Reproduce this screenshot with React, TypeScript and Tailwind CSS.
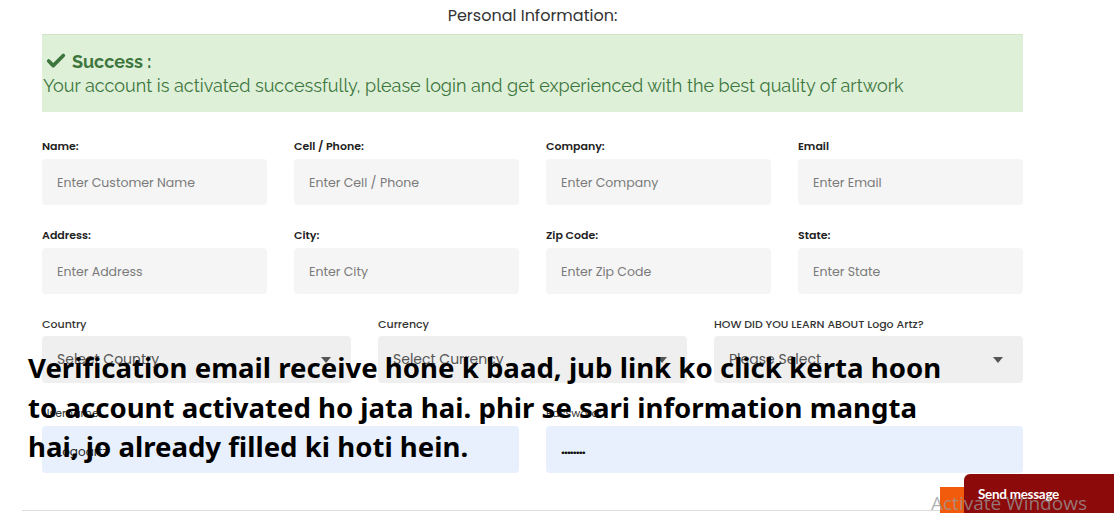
import { Check } from "lucide-react";

const poppins = "font-['Poppins','Open_Sans',sans-serif]";

function Field({ label, placeholder }: { label: string; placeholder: string }) {
  return (
    <div>
      <label className="block h-4 mb-[5px] text-[11px] leading-4 font-semibold text-[#222]">{label}</label>
      <div className="h-[46px] rounded-[4px] bg-[#f5f5f5] px-[15px] pt-[3px] flex items-center text-[12.5px] text-[#7a7a7a]">
        {placeholder}
      </div>
    </div>
  );
}

function SelectField({ label, value }: { label: string; value: string }) {
  return (
    <div>
      <label className="block h-4 mb-1 text-[11px] leading-4 font-medium text-[#333]">{label}</label>
      <div className="h-[47px] rounded-[4px] bg-[#efefef] pl-[15px] pr-[20px] flex items-center justify-between text-[14px] text-[#555]">
        <span>{value}</span>
        <svg width="10" height="6" viewBox="0 0 10 6" className="fill-[#555]">
          <path d="M0 0h10L5 6z" />
        </svg>
      </div>
    </div>
  );
}

export default function App() {
  return (
    <div className={`relative w-[1114px] h-[513px] overflow-hidden bg-white ${poppins}`}>
      <div className="w-[981px] ml-[42px]">
        <h2 className="pt-[6px] h-[34px] text-center text-[16px] leading-5 text-[#333]">Personal Information:</h2>

        <div className="h-[78px] bg-[#dff0d8] border-t border-[#d0e6c6] pl-px pt-[14px] text-[#3c763d] font-['Raleway','Lato',sans-serif]">
          <div className="flex items-center h-6 gap-[5px] text-[18px] font-bold">
            <Check size={22} strokeWidth={4} className="ml-[2px] text-[#3c763d]" />
            <span>Success :</span>
          </div>
          <p className="h-[25px] leading-[25px] text-[18px]">
            Your account is activated successfully, please login and get experienced with the best quality of artwork
          </p>
        </div>

        <div className="mt-[26px] grid grid-cols-4 gap-x-[27px] gap-y-[22px]">
          <Field label="Name:" placeholder="Enter Customer Name" />
          <Field label="Cell / Phone:" placeholder="Enter Cell / Phone" />
          <Field label="Company:" placeholder="Enter Company" />
          <Field label="Email" placeholder="Enter Email" />
          <Field label="Address:" placeholder="Enter Address" />
          <Field label="City:" placeholder="Enter City" />
          <Field label="Zip Code:" placeholder="Enter Zip Code" />
          <Field label="State:" placeholder="Enter State" />
        </div>

        <div className="mt-[22px] grid grid-cols-3 gap-x-[27px]">
          <SelectField label="Country" value="Select Country" />
          <SelectField label="Currency" value="Select Currency" />
          <SelectField label="HOW DID YOU LEARN ABOUT Logo Artz?" value="Please Select" />
        </div>

        <div className="mt-[22px] grid grid-cols-2 gap-x-[27px]">
          <div>
            <label className="block h-4 mb-[5px] text-[11px] leading-4 text-[#333]">Username:</label>
            <div className="h-[47px] rounded-[4px] bg-[#e8f0fe] px-[15px] flex items-center pt-[4px] text-[12px] text-[#222]">
              Logoartz
            </div>
          </div>
          <div>
            <label className="block h-4 mb-[5px] text-[11px] leading-4 text-[#333]">Password:</label>
            <div className="h-[47px] rounded-[4px] bg-[#e8f0fe] px-[15px] flex items-center text-[14px] tracking-[-1px] text-[#111] font-bold">
              ........
            </div>
          </div>
        </div>
      </div>

      <div className="mt-[37px] ml-[22px] h-px bg-[#dcdcdc]" />

      {/* annotation over the screenshot */}
      <p className="absolute left-[28px] top-[348px] text-[27.6px] leading-[39.5px] font-bold text-black font-['Noto_Sans','Open_Sans',sans-serif]">
        Verification email receive hone k baad, jub link ko click kerta hoon
        <br />
        to account activated ho jata hai. phir se sari information mangta
        <br />
        hai, jo already filled ki hoti hein.
      </p>

      {/* chat widget */}
      <div className="absolute left-[940px] top-[487px] w-[30px] h-[26px] bg-[#f25a0c]" />
      <div className="absolute left-[964px] top-[474px] w-[160px] h-[40px] rounded-tl-[6px] bg-[#8c0a0a] pl-[14px] pt-[10px] text-[13.5px] font-bold text-white font-['Lato',sans-serif] tracking-[-0.3px]">
        Send message
      </div>
      <div className="absolute left-[931px] top-[489px] text-[19px] leading-7 text-[#9a9a9a]/75 font-['Open_Sans',sans-serif]">
        Activate Windows
      </div>
    </div>
  );
}
